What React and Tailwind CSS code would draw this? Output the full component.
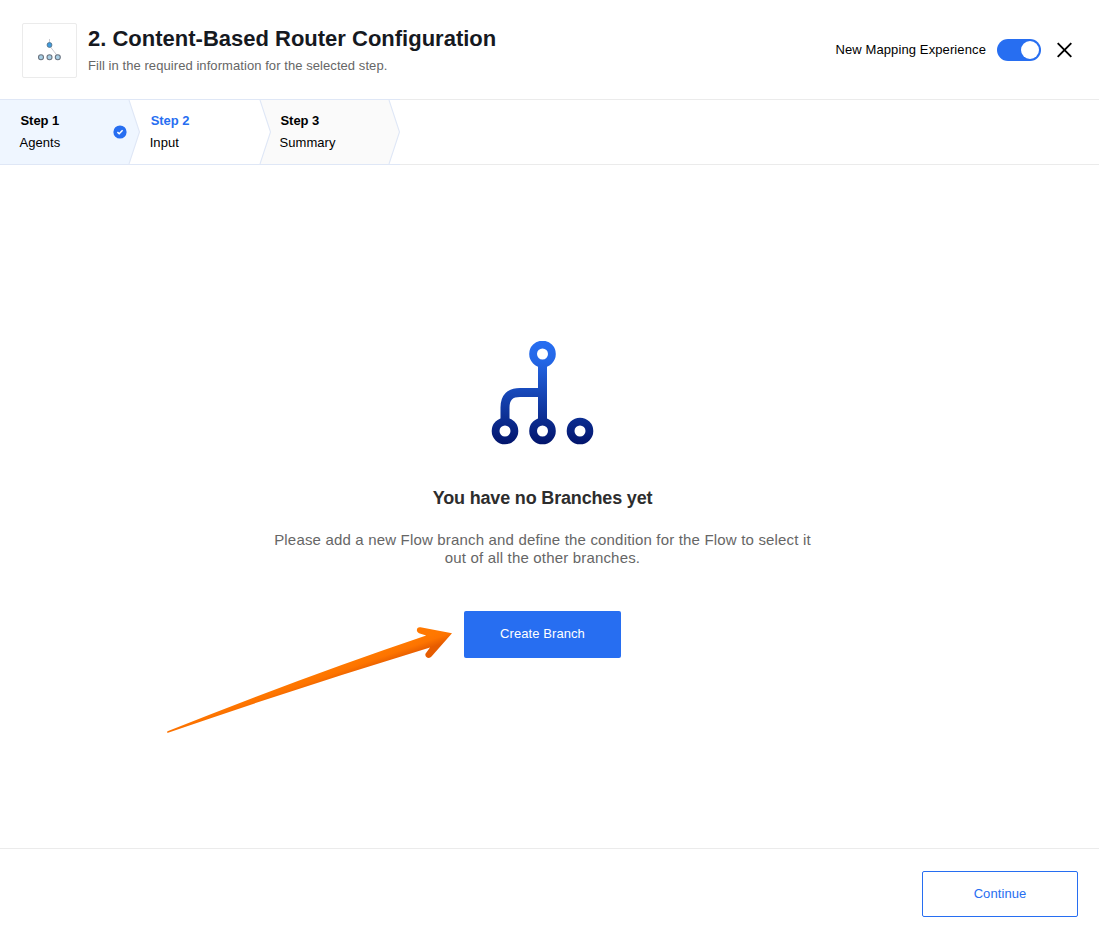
import React from "react";

function StepArrow({ fill, next }) {
  return (
    <svg className="block h-16 w-3 shrink-0" viewBox="0 0 12 64" aria-hidden="true">
      <rect width="12" height="64" fill={next} />
      <path d="M0 0H1L11.5 32L1 64H0Z" fill={fill} />
      <path d="M1 0L11.5 32L1 64" fill="none" stroke="#dfe7f6" strokeWidth="1.1" />
    </svg>
  );
}

function Step({ title, label, active, done, className }) {
  return (
    <div className={"flex h-16 shrink-0 items-center justify-between text-[13px] " + className}>
      <div>
        <div
          className={
            "pl-px leading-[22px] font-bold tracking-[-0.05px] " + (active ? "text-[#276ef1]" : "text-black")
          }
        >
          {title}
        </div>
        <div className="leading-[22px] tracking-[0.05px]">{label}</div>
      </div>
      {done && (
        <svg className="mr-px size-[14px]" viewBox="0 0 14 14" aria-hidden="true">
          <circle cx="7" cy="7" r="6.6" fill="#276ef1" />
          <path d="M4.4 7.1L6.2 8.8L9.6 5.3" fill="none" stroke="#fff" strokeWidth="1.5" />
        </svg>
      )}
    </div>
  );
}

function RouterIcon() {
  return (
    <svg className="block size-[54px]" viewBox="0 0 54 54" aria-hidden="true">
      <path d="M26.5 15V20M27.5 23L34.5 32" stroke="#bcbcc4" strokeWidth="0.8" fill="none" />
      <circle cx="26.5" cy="21" r="2.4" fill="#3d9be0" stroke="#587890" strokeWidth="1" />
      <g fill="#a9d0e6" stroke="#6b7480" strokeWidth="1.1">
        <circle cx="18" cy="33.3" r="2.5" />
        <circle cx="26.5" cy="33.3" r="2.5" />
        <circle cx="34.8" cy="33.3" r="2.5" />
      </g>
    </svg>
  );
}

function BranchesIcon() {
  return (
    <svg className="block h-[104px] w-[103px]" viewBox="0 0 103 104" aria-hidden="true">
      <defs>
        <linearGradient id="branches" gradientUnits="userSpaceOnUse" x1="0" y1="0" x2="0" y2="104">
          <stop offset="0" stopColor="#276ef1" />
          <stop offset="0.18" stopColor="#2467e7" />
          <stop offset="1" stopColor="#02146b" />
        </linearGradient>
      </defs>
      <g fill="none" stroke="url(#branches)">
        <path d="M51.5 22V82" strokeWidth="9" />
        <path d="M51.5 51.5H29Q14 51.5 14 66.5V82" strokeWidth="9" />
      </g>
      <g fill="#fff" stroke="url(#branches)" strokeWidth="7.8">
        <circle cx="51.5" cy="13" r="9.4" />
        <circle cx="14" cy="90" r="9.4" />
        <circle cx="51.5" cy="90" r="9.4" />
        <circle cx="89" cy="90" r="9.4" />
      </g>
    </svg>
  );
}

function Pointer() {
  return (
    <svg
      className="pointer-events-none absolute top-[455px] left-[160px] h-[120px] w-[300px]"
      viewBox="160 620 300 120"
      aria-hidden="true"
    >
      <defs>
        <linearGradient id="pointer" gradientUnits="userSpaceOnUse" x1="315" y1="675" x2="319" y2="686.5">
          <stop offset="0" stopColor="#ff7800" />
          <stop offset="0.4" stopColor="#fd7400" />
          <stop offset="1" stopColor="#e65c00" />
        </linearGradient>
      </defs>
      <path
        d="M167.5 731.3Q300 678 426.2 635.4L419 633.2C415.5 631.5 416.5 626.5 420.5 627.2L452 633.2L431.5 656.6C428.5 660 423.5 656 426 653L430 647.4Q300 687 168 732.8Q166.5 732.8 167.5 731.3Z"
        fill="url(#pointer)"
      />
    </svg>
  );
}

export default function App() {
  return (
    <div className="flex h-[938px] w-full flex-col overflow-hidden bg-white font-['Liberation_Sans',Arial,sans-serif] text-black">
      <header className="flex h-[100px] shrink-0 items-start border-b border-[#ebebeb] pl-[22px]">
        <div className="mt-[23px] size-[55px] shrink-0 rounded-[2px] border border-[#ebebeb]">
          <RouterIcon />
        </div>
        <div className="mt-[26px] ml-[11px]">
          <h1 className="text-[22px] leading-[26px] font-bold whitespace-nowrap text-[#16191f]">
            2. Content-Based Router Configuration
          </h1>
          <p className="mt-[5px] text-[13px] leading-[17px] tracking-[0.07px] whitespace-nowrap text-[#666]">
            Fill in the required information for the selected step.
          </p>
        </div>
        <div className="mt-[38px] mr-[26px] ml-auto flex h-6 items-center">
          <span className="text-[13px] tracking-[0.11px] whitespace-nowrap">New Mapping Experience</span>
          <button
            role="switch"
            aria-checked="true"
            aria-label="New Mapping Experience"
            className="ml-[11px] flex h-[22px] w-11 items-center justify-end rounded-full bg-[#276ef1] pr-[2px] pb-px"
          >
            <span className="size-[18px] rounded-full bg-white" />
          </button>
          <button aria-label="Close" className="ml-[15px]">
            <svg className="block size-[17px]" viewBox="0 0 17 17">
              <path d="M1.7 1.2L15.3 14.8M15.3 1.2L1.7 14.8" stroke="#000" strokeWidth="1.9" />
            </svg>
          </button>
        </div>
      </header>

      <nav className="flex h-[65px] shrink-0 border-b border-[#ebebeb]">
        <div className="-mt-px -mb-px flex h-[66px] border-y border-[#dfe7f6]">
          <Step title="Step 1" label="Agents" done className="w-[128px] bg-[#eff6ff] pl-[19.5px]" />
          <StepArrow fill="#eff6ff" next="#fff" />
          <Step title="Step 2" label="Input" active className="w-[119px] bg-white pl-[9.7px]" />
          <StepArrow fill="#fff" next="#fafafa" />
          <Step title="Step 3" label="Summary" className="w-[117px] bg-[#fafafa] pl-[8.5px]" />
          <StepArrow fill="#fafafa" next="#fff" />
        </div>
      </nav>

      <main className="relative flex min-h-0 flex-1 flex-col items-center pt-[176px] pr-[14px] text-center">
        <BranchesIcon />
        <h2 className="mt-[42px] text-[18px] leading-[22px] font-bold tracking-[-0.17px] text-[#2d2d2d]">
          You have no Branches yet
        </h2>
        <p className="mt-[22px] text-[15px] leading-[18px] tracking-[0.175px] whitespace-nowrap text-[#666]">
          Please add a new Flow branch and define the condition for the Flow to select it
          <br />
          out of all the other branches.
        </p>
        <button className="mt-[44px] h-[47px] w-[157px] rounded-[2px] bg-[#276ef1] pb-[2px] text-[13px] tracking-[0.08px] text-white">
          Create Branch
        </button>
        <Pointer />
      </main>

      <footer className="flex h-[90px] shrink-0 items-start justify-end border-t border-[#ebebeb] pt-[22px] pr-[21px]">
        <button className="h-[46px] w-[156px] rounded-[2px] border border-[#276ef1] pb-px text-[13px] tracking-[0.08px] text-[#276ef1]">
          Continue
        </button>
      </footer>
    </div>
  );
}
